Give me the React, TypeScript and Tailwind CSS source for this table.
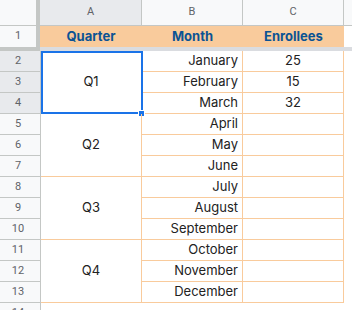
import React from 'react';

const months = [
  'January', 'February', 'March',
  'April', 'May', 'June',
  'July', 'August', 'September',
  'October', 'November', 'December',
];

const enrollees: Record<number, string> = { 0: '25', 1: '15', 2: '32' };

const quarters = ['Q1', 'Q2', 'Q3', 'Q4'];

export default function App() {
  return (
    <div className="w-[352px] h-[310px] overflow-hidden bg-white font-['Inter',sans-serif] text-[13px] text-[#222]">
      {/* frozen area: column headers + row 1 */}
      <div className="flex">
        <div className="w-[36px] flex flex-col">
          <div className="h-[26px] bg-[#f8f9fa] border-b border-[#c4c7c5]" />
          <div className="h-[21px] bg-[#f8f9fa] flex items-center justify-center font-['Roboto',sans-serif] text-[11px] text-[#5f6368]">
            1
          </div>
        </div>
        <div className="w-[4px] h-[47px] bg-[#c4c7c5]" />
        <div className="flex-1 flex flex-col">
          <div className="h-[26px] flex border-b border-[#c4c7c5] font-['Roboto',sans-serif] text-[11px] text-[#5f6368]">
            <div className="w-[102px] bg-[#e8eaed] border-r border-[#c4c7c5] flex items-center justify-center">A</div>
            <div className="w-[101px] bg-[#f8f9fa] border-r border-[#c4c7c5] flex items-center justify-center">B</div>
            <div className="w-[101px] bg-[#f8f9fa] border-r border-[#c4c7c5] flex items-center justify-center">C</div>
            <div className="flex-1 bg-[#f8f9fa]" />
          </div>
          <div className="h-[21px] flex font-bold text-[#0b5394]">
            <div className="w-[102px] bg-[#f9cb9c] flex items-center justify-center">Quarter</div>
            <div className="w-[101px] bg-[#f9cb9c] flex items-center justify-center">Month</div>
            <div className="w-[101px] bg-[#f9cb9c] flex items-center justify-center">Enrollees</div>
            <div className="flex-1" />
          </div>
        </div>
      </div>

      {/* freeze bar */}
      <div className="flex h-[4px]">
        <div className="w-[40px] bg-[#c4c7c5]" />
        <div className="flex-1 bg-[#dadce0]" />
      </div>

      {/* body */}
      <div className="grid grid-cols-[41px_101px_101px_101px_1fr] grid-rows-[repeat(13,21px)]">
        {months.map((m, i) => {
          const row = i + 2;
          const selected = row >= 2 && row <= 4;
          return (
            <React.Fragment key={m}>
              <div
                style={{ gridRow: i + 1, gridColumn: 1 }}
                className={`border-r border-b border-[#c4c7c5] pr-[4px] flex items-center justify-center font-['Roboto',sans-serif] text-[11px] text-[#5f6368] ${selected ? 'bg-[#e8eaed]' : 'bg-[#f8f9fa]'}`}
              >
                {row}
              </div>
              <div
                style={{ gridRow: i + 1, gridColumn: 3 }}
                className="border-r border-b border-[#f9cb9c] pr-[4px] flex items-center justify-end"
              >
                {m}
              </div>
              <div
                style={{ gridRow: i + 1, gridColumn: 4 }}
                className="border-r border-b border-[#f9cb9c] flex items-center justify-center"
              >
                {enrollees[i] ?? ''}
              </div>
            </React.Fragment>
          );
        })}

        {quarters.map((q, i) => (
          <div
            key={q}
            style={{ gridRow: `${i * 3 + 1} / span 3`, gridColumn: 2 }}
            className="relative border-r border-b border-[#f9cb9c] flex items-center justify-center"
          >
            {q}
            {i === 0 && (
              <>
                <div className="absolute left-0 top-0 w-[102px] h-[63px] border-2 border-[#1a73e8]" />
                <div className="absolute left-[97px] top-[59px] w-[7px] h-[7px] bg-[#1a73e8] border border-white" />
              </>
            )}
          </div>
        ))}

        {/* row 14, cut off */}
        <div
          style={{ gridRow: 13, gridColumn: 1 }}
          className="border-r border-[#c4c7c5] bg-[#f8f9fa] pr-[4px] flex items-center justify-center font-['Roboto',sans-serif] text-[11px] text-[#5f6368]"
        >
          14
        </div>
      </div>
    </div>
  );
}
